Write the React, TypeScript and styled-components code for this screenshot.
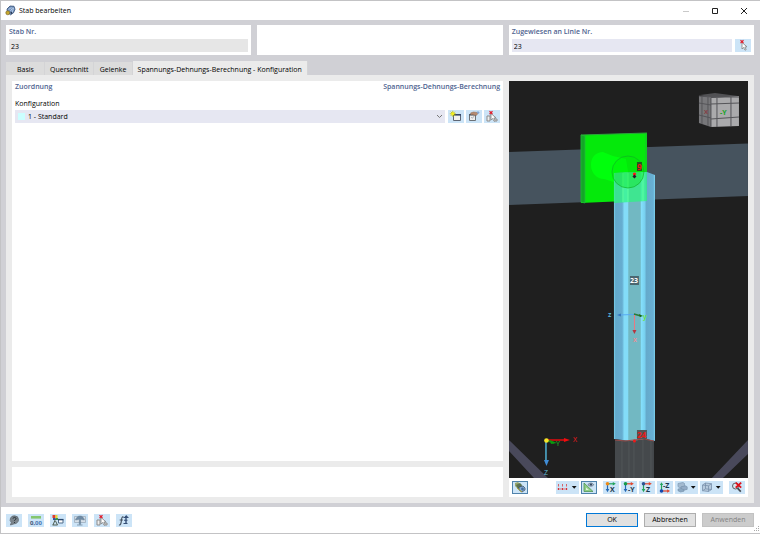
import React from "react";
import styled, { createGlobalStyle, css } from "styled-components";

const Global = createGlobalStyle`
  *, *::before, *::after { box-sizing: border-box; }
  html, body, #root { margin: 0; height: 100%; }
  body { background: #fff; }
  body, button, input, select {
    font-family: "Open Sans", "Noto Sans", sans-serif;
    font-size: 7px;
    font-weight: 500;
    line-height: 10px;
    color: #000;
  }
`;

const Dialog = styled.div`
  display: flex;
  flex-direction: column;
  min-height: 100vh;
  background: #d0d0d5;
  border: 1px solid #c3c3c5;
  border-width: 1px 0 1px 1px;
`;

const TitleBar = styled.header`
  display: flex;
  align-items: center;
  height: 19px;
  padding: 0 3px 0 4px;
  gap: 3px;
  background: #fff;
`;

const Title = styled.h1`
  flex: 1;
  margin: 0;
  font-size: 7px;
  font-weight: 500;
`;

const WindowButton = styled.button`
  width: 26px;
  height: 18px;
  padding: 0;
  border: 0;
  background: none;
  display: grid;
  place-items: center;
`;

const Body = styled.main`
  flex: 1;
  display: flex;
  flex-direction: column;
  padding: 5px 6px 4px 5px;
`;

const HeaderCards = styled.section`
  display: grid;
  grid-template-columns: repeat(3, 1fr);
  gap: 6px;
`;

const Card = styled.div`
  display: flex;
  flex-direction: column;
  height: 30px;
  padding: 2px 3px;
  background: #fff;
`;

const heading = css`
  font-size: 7px;
  line-height: 10px;
  font-weight: 600;
  color: #4f6390;
`;

const CardLabel = styled.label`
  ${heading}
  height: 12px;
`;

const FieldRow = styled.div`
  display: flex;
  gap: 3px;
`;

const Field = styled.input<{ $muted?: boolean }>`
  flex: 1;
  min-width: 0;
  height: 13px;
  padding: 1px 2px 0;
  border: 0;
  background: ${(p) => (p.$muted ? "#e6e6e6" : "#e6e7f2")};
`;

const Tabs = styled.div`
  display: flex;
  align-items: flex-end;
  height: 14px;
  margin-top: 6px;
`;

const Tab = styled.button<{ $active?: boolean }>`
  height: ${(p) => (p.$active ? 14 : 13)}px;
  min-width: 39px;
  padding: ${(p) => (p.$active ? "3px 5px 0" : "2px 4px 0 5px")};
  border: 0;
  border-right: 1px solid #d4d4d6;
  background: ${(p) => (p.$active ? "#ebebeb" : "#dcdcdc")};
`;

const Page = styled.section`
  flex: 1;
  display: grid;
  grid-template-columns: 37fr 18fr;
  gap: 6px;
  padding: 6px;
  background: #ebebeb;
`;

const Column = styled.div`
  display: flex;
  flex-direction: column;
  gap: 6px;
  min-width: 0;
`;

const Panel = styled.div`
  flex: 1;
  padding: 1px 3px;
  background: #fff;
`;

const NotePanel = styled.div`
  height: 30px;
  background: #fff;
`;

const PanelHeader = styled.div`
  display: flex;
  justify-content: space-between;
  height: 17px;
`;

const Heading = styled.h2`
  ${heading}
  margin: 0;
`;

const FormLabel = styled.label`
  display: block;
  height: 11px;
`;

const ConfigRow = styled.div`
  display: flex;
  gap: 2px;
`;

const SelectBox = styled.div`
  flex: 1;
  display: grid;
  grid-template-columns: 12px 1fr 12px;
  align-items: center;
  justify-items: center;
  margin-right: 1px;
  background: #e6e7f2;
  & > * { grid-row: 1; }
  svg { grid-column: 3; pointer-events: none; }
`;

const Select = styled.select`
  grid-column: 1 / -1;
  width: 100%;
  height: 13px;
  padding: 1px 12px 0 13px;
  border: 0;
  background: none;
  appearance: none;
`;

const Swatch = styled.span`
  grid-column: 1;
  width: 7px;
  height: 7px;
  margin-left: 1px;
  background: #ccffff;
  pointer-events: none;
`;

const IconButton = styled.button<{ $wide?: boolean; $pressed?: boolean }>`
  display: flex;
  align-items: center;
  justify-content: center;
  flex: none;
  width: ${(p) => (p.$wide ? 23 : 16)}px;
  height: 13px;
  padding: 0;
  border: ${(p) => (p.$pressed ? "1px solid #4f83ac" : "0")};
  background: #cce4f7;
  svg { flex: none; }
`;

const Viewer = styled.div`
  display: flex;
  flex-direction: column;
  min-width: 0;
  background: #fff;
`;

const Scene = styled.svg`
  display: block;
  flex: 1 1 0;
  width: 100%;
  min-height: 0;
  background: #1f1f1f;
  font-family: "Open Sans", sans-serif;
  font-size: 7px;
`;

const ViewTools = styled.div`
  display: flex;
  align-items: center;
  justify-content: space-between;
  height: 19px;
  padding: 0 3px;
`;

const ToolGroup = styled.div`
  display: flex;
  gap: 2px;
`;

const ToolCluster = styled.div`
  display: flex;
  gap: 6px;
`;

const Footer = styled.footer`
  display: flex;
  align-items: center;
  justify-content: space-between;
  height: 26px;
  padding: 0 6px 0 5px;
  background: #fff;
`;

const Actions = styled.div`
  display: flex;
  align-items: center;
  gap: 6px;
`;

const Action = styled.button<{ $primary?: boolean }>`
  width: 52px;
  height: 14px;
  padding: 0;
  border: 1px solid ${(p) => (p.$primary ? "#0078d7" : "#adadad")};
  background: #e1e1e1;
  &:disabled { color: #838383; background: #cccccc; border-color: #c2c2c2; }
`;

const Grip = styled.svg`
  align-self: flex-end;
  margin: 0 -6px -5px -6px;
`;

const Icon = ({ children, w = 16 }: { children: React.ReactNode; w?: number }) => (
  <svg width={w} height="13" viewBox={`0 0 ${w} 13`} aria-hidden="true" fill="none">
    {children}
  </svg>
);

const PickIcon = ({ boxes = false }: { boxes?: boolean }) => (
  <Icon>
    {boxes && (
      <path d="M3 6h3v5H3zM6 5h2M10 9h3v2h-3" stroke="#8b8b8b" fill="#eee" />
    )}
    <path d="M7 3.5l5 4.3-2.2.2 1.4 2.5-1.2.7-1.4-2.7L7 10z" fill="#fff" stroke="#828282" strokeWidth=".8" />
    <path d="M5.5 1.3l3 2.8m0-2.8l-3 2.8" stroke="#e21c2b" strokeWidth="1.2" />
  </Icon>
);

const NewIcon = () => (
  <Icon>
    <path d="M5.5 4.5h7v6h-7z" fill="#f2f2ee" stroke="#5e6674" />
    <path d="M5 4.8h8" stroke="#34466b" strokeWidth="1.6" />
    <path d="M4.8.8v6M1.8 3.8h6M2.7 1.7l4.2 4.2m0-4.2L2.7 5.9" stroke="#c5c70a" strokeWidth=".9" />
    <circle cx="4.8" cy="3.8" r="1.5" fill="#f6ef16" />
  </Icon>
);

const EditIcon = () => (
  <Icon>
    <path d="M3.5 4.5h6v6h-6z" fill="#eee" stroke="#6c7176" />
    <path d="M3 4.8h7" stroke="#505e6b" strokeWidth="1.5" />
    <path d="M4.5 3l3-1 3.5.4 1 1.2-1.8 1.8-2.2-.3-1.4-.7-1.4.5z" fill="#b78b70" stroke="#86634f" strokeWidth=".5" />
    <path d="M11.3 1.7l1.7 1.5" stroke="#82a7d6" strokeWidth="2" />
    <path d="M5.2 7l1.2 1.3L8.2 6" stroke="#9ba1a8" strokeWidth=".8" />
  </Icon>
);

const AppIcon = () => (
  <svg width="11" height="11" viewBox="0 0 11 11" aria-hidden="true">
    <path d="M2 4L5 1l4 .3 1 3-1.5 3.5-3 2L2.5 7z" fill="#6e8fbd" stroke="#344d72" strokeWidth=".8" />
    <path d="M3.5 4.5l3-2M5 6.5l3-4M7 8L8.5 3" stroke="#c8d9ef" strokeWidth=".8" />
    <circle cx="2.8" cy="7.8" r="2" fill="#c9a92e" stroke="#6d5b20" strokeWidth=".6" />
    <path d="M5.5 6.5l2 1-1.5 2z" fill="#23334d" />
  </svg>
);

const HelpIcon = () => (
  <Icon>
    <path d="M8.5 1.8a4 4 0 014 4c0 2.3-2 4-4.2 4L4.4 11l.9-2.4a4 4 0 013.2-6.8z" fill="#7b858d" stroke="#596168" strokeWidth=".7" />
    <path d="M7 4.6c.2-1.7 3.2-1.5 3 .1-.1 1-1.5 1.1-1.5 2.2M8.5 8v.9" stroke="#263036" />
  </Icon>
);

const UnitsIcon = () => (
  <Icon>
    <path d="M3 2h10v2.6H3z" fill="#84c66e" />
    <text x="2" y="11" fontSize="6" fontWeight="700" fill="#3f5272">0,</text>
    <text x="7" y="11" fontSize="6" fontWeight="700" fill="#4876b2">00</text>
  </Icon>
);

const MemberIcon = () => (
  <Icon>
    <path d="M2.5 1h3v3h-3z" fill="#de3d31" />
    <path d="M5.5 1h2v3h-2z" fill="#e6d832" />
    <path d="M3 4h2.5v2H3z" fill="#3353ae" />
    <path d="M5.5 4H8v2H5.5z" fill="#3b9c48" />
    <path d="M5.5 5L3 11m2.5-4l2 4M2.5 11h5" stroke="#4c5d50" />
    <path d="M8.5 5.5h4.5v3.5H8.5z" fill="#fff" stroke="#506d8b" />
    <path d="M8 5.6h5.5" stroke="#29486f" strokeWidth="1.4" />
  </Icon>
);

const DisplayIcon = () => (
  <Icon>
    <path d="M2.5 2.5h11v6h-11z" fill="#d6e0e9" stroke="#9dadbd" strokeWidth=".8" />
    <path d="M3.5 6C4 3.7 6 2 8.1 2S12 3.7 12.4 6L10 5.6 8.6 5v5.5H7.3V5L6 5.6z" fill="#6f8ba5" stroke="#607a91" strokeWidth=".5" />
    <path d="M5 11h5.5" stroke="#839bb0" />
  </Icon>
);

const FunctionIcon = () => (
  <Icon>
    <path d="M7.5 3C5.2 2.2 5.8 6 5 9c-.5 2-1.2 2.2-2 1.7M3.7 6h3.2" stroke="#43505e" strokeWidth="1.1" />
    <path d="M7.5 3.5h5M7.5 9.5h4M8 6.3h3.5" stroke="#354f77" strokeWidth="1.1" />
    <path d="M10 2v7.5" stroke="#354f77" strokeWidth="1.4" />
    <path d="M8.5 3l1.7-2L12 3z" fill="#354f77" />
  </Icon>
);

const RenderIcon = () => (
  <Icon w={14}>
    <path d="M2 2l3-1 2 2v3L4 7 2 5z" fill="#96a56c" />
    <path d="M3 4l4-2 2 2-1 3-3 1z" fill="#5a7250" />
    <path d="M6 6l4-1 2 2v2l-3 2-3-2z" fill="#88acd4" stroke="#30445a" strokeWidth=".7" />
    <path d="M4 7l5 4" stroke="#b1a62d" />
    <circle cx="9.5" cy="8" r="1.4" fill="#466f9e" />
  </Icon>
);

const Caret = () => <path d="M15.8 5h4.8l-2.4 2.7z" fill="#111" />;

const NumberingIcon = () => (
  <Icon w={23}>
    <path d="M1.5 8h10" stroke="#dc6f74" />
    <path d="M2.5 7v2m4-2v2m4-2v2" stroke="#d53339" />
    <path d="M2.5 3v2.5m4-2.5v2.5m4-2.5v2.5" stroke="#d76368" />
    <Caret />
  </Icon>
);

const MeasureIcon = () => (
  <Icon w={14}>
    <path d="M2 2v8.5h9z" fill="#8fcd85" stroke="#4f9455" strokeWidth=".8" />
    <path d="M4 6.5V9h3z" fill="#dff3df" />
    <path d="M5.8 3.7c2-2.2 4.4-2.2 6 0-1.6 2-4 2-6 0z" fill="#a8b5c5" stroke="#586c82" strokeWidth=".7" />
    <circle cx="9" cy="3.6" r="1.1" fill="#354b64" />
  </Icon>
);

const AxisIcon = ({ label, right, down, origin, up }: { label: string; right?: string; down: string; origin: string; up?: boolean }) => (
  <Icon>
    {up ? (
      <>
        <path d="M4.5 10V3" stroke={down} strokeWidth="1.2" />
        <path d="M2.8 4l1.7-2.8L6.2 4z" fill={down} />
        <path d="M5 10h6" stroke={right} strokeWidth="1.2" />
        <path d="M10.2 8.2l2.8 1.8-2.8 1.8z" fill={right} />
        <circle cx="4.5" cy="10" r="1.8" fill={origin} />
        <text x="6" y="7" fontSize="7" fontWeight="700" fill="#18364b">{label}</text>
      </>
    ) : (
      <>
        <path d="M4.5 3v6" stroke={down} strokeWidth="1.2" />
        <path d="M2.7 8h3.6l-1.8 3.2z" fill={down} />
        <path d="M5 2.8h5.5" stroke={right} strokeWidth="1.2" />
        <path d="M9.8 1l3 1.8-3 1.8z" fill={right} />
        <circle cx="4.5" cy="2.8" r="1.8" fill={origin} />
        <text x="7" y="11" fontSize="7" fontWeight="700" fill="#18364b">{label}</text>
      </>
    )}
  </Icon>
);

const SolidIcon = () => (
  <Icon w={23}>
    <path d="M3 2.5l5-1 1.5 1v3.2l-4.8 1L3 5.6z" fill="#a3bad0" stroke="#7c9ab5" strokeWidth=".7" />
    <path d="M6 5.8l4.5-1 1.7 1v2.6l-4.5 1L6 8.2z" fill="#93acc6" stroke="#7690a9" strokeWidth=".6" />
    <path d="M3 8l3-.6 3 1.5v1.3l-3.4.8L3 9.8z" fill="#8ba8c2" stroke="#7690a9" strokeWidth=".6" />
    <Caret />
  </Icon>
);

const BoxIcon = () => (
  <Icon w={23}>
    <path d="M2.5 4l3-2 6 .7v5.8l-3 2-6-.8z" fill="#b7cbde" />
    <path d="M2.5 4l3-2 6 .7v5.8l-3 2-6-.8zM2.5 4l6 .8 3-2.1M8.5 4.8v5.7M5.5 2v5.8l-3 2m3-2l6 .7" stroke="#7991ac" strokeWidth=".8" />
    <Caret />
  </Icon>
);

const ResetIcon = () => (
  <Icon>
    <circle cx="6.5" cy="5" r="3" fill="#d9e3eb" stroke="#5d6166" />
    <path d="M8.5 7.2l3.3 3.4" stroke="#45494f" strokeWidth="1.7" />
    <path d="M6.7 1.6l5.5 5m0-5l-5.5 5" stroke="#e00f18" strokeWidth="1.8" />
  </Icon>
);

const ModelView = () => (
  <Scene viewBox="509 81 239 397" preserveAspectRatio="xMidYMid slice" role="img" aria-label="Stab 23">
    <defs>
      <linearGradient id="column">
        <stop offset="0" stopColor="#7bd4ed" />
        <stop offset=".04" stopColor="#63a9cb" />
        <stop offset=".2" stopColor="#66add0" />
        <stop offset=".25" stopColor="#83dcf8" />
        <stop offset=".34" stopColor="#83dcf8" />
        <stop offset=".36" stopColor="#72b8c2" />
        <stop offset=".64" stopColor="#72b8c2" />
        <stop offset=".67" stopColor="#84dffb" />
        <stop offset=".75" stopColor="#78d0ef" />
        <stop offset=".79" stopColor="#65aacb" />
        <stop offset=".96" stopColor="#68b0d4" />
        <stop offset="1" stopColor="#82dcf8" />
      </linearGradient>
    </defs>
    <path d="M509 152L748 143.500V196L509 205z" fill="#46535e" />
    <path d="M509 440l39 38h-14l-25-27zM748 440l-36 38h11l25-24z" fill="#49495b" />
    <path d="M615 440h39v38h-39z" fill="#45494c" />
    <path d="M622 440v38M629 440v38M634 440v38M643 440v38M651 440v38" stroke="#525658" />
    <path d="M581 135l66-2v67l-66 3z" fill="#05e90b" />
    <path d="M581 135l4 1v67l-4-1zM646 134v67" fill="#13a827" stroke="#22b73a" strokeWidth=".8" />
    <path d="M581 135l66-2" stroke="#2ba43a" />
    <path d="M603 152c-7 0-12 5-12 13s6 14 13 14l13 4 12-6-3-18-13-3z" fill="#00ff0c" />
    <path d="M614 173l9-.5 24-.5 8 3v266l-9-2-15 2-17-2z" fill="url(#column)" />
    <path d="M614 173l9-.5 24-.5v29l-33 2z" fill="#2af87c" opacity=".7" />
    <path d="M623 173v29M628 173v29M643 173v28" stroke="#5cffa0" opacity=".5" strokeWidth="2" />
    <circle cx="628" cy="172" r="16" fill="#04e90a" fillOpacity=".35" stroke="#0fae25" strokeOpacity=".7" strokeWidth=".9" />
    <path d="M637 162h5v9h-5z" fill="#245820" />
    <text x="637" y="170" fill="#ee1717" fontSize="8" fontWeight="700">9</text>
    <circle cx="634.5" cy="174" r="1.600" fill="#ff1717" />
    <path d="M634.5 174.500l2 2-2 2-2-2z" fill="#28182b" />

    <path d="M630 276h9v9h-9z" fill="#4b6770" />
    <text x="630" y="283" fill="#fff" fontWeight="700">23</text>
    <path d="M634 314.500l-16 .5" stroke="#58aaf3" />
    <path d="M617 315l4-1.500v3z" fill="#3977b6" />
    <path d="M634 314l7 2" stroke="#2b7a36" strokeWidth="1.500" />
    <path d="M639 314l4 2-3 1z" fill="#166713" />
    <path d="M634.500 315v16" stroke="#ed7780" />
    <path d="M632.500 330h4l-2 4z" fill="#b7353f" />
    <text x="608" y="317" fill="#5dbbe2" fontWeight="600">z</text>
    <text x="643" y="319" fill="#66e431" fontWeight="600">y</text>
    <text x="633" y="342" fill="#f08b91" fontWeight="600">x</text>

    <path d="M615 440l10 1 9-1 10-1 10 2" stroke="#974b48" fill="none" />
    <path d="M637 430h10v9h-10z" fill="#535456" />
    <text x="637" y="438" fill="#f01616" fontSize="8" fontWeight="700">24</text>
    <circle cx="634.500" cy="441" r="1.500" fill="#f01818" />

    <path d="M546 440h20" stroke="#f30b0e" strokeWidth="1.400" />
    <path d="M564 438l6 2-6 2z" fill="#f30b0e" />
    <path d="M546 440v22" stroke="#4fb1d4" strokeWidth="1.500" />
    <path d="M544 460h5l-2.500 6z" fill="#408dd7" />
    <path d="M546 440l8 3" stroke="#159116" strokeWidth="1.500" />
    <path d="M550 440l7 3-6 1z" fill="#0c980e" />
    <circle cx="546.500" cy="440.500" r="2.300" fill="#f6e626" />
    <text x="573" y="442" fill="#f5181c">X</text>
    <text x="556" y="446" fill="#1fc520">Y</text>
    <text x="544" y="475" fill="#63bdd7">Z</text>

    <path d="M700 95l15-2 23 3-27 2z" fill="#515154" />
    <path d="M699 96l12 1v30l-12-4z" fill="#77777a" />
    <path d="M711 98l28-2v30l-28 1z" fill="#aaaaac" />
    <path d="M699 96l12 1M699 103l12 2M699 115l12 3M702 96v28M708 97v29M711 98v29M717 98v29M731 97v29M711 104l28-1M711 119l28-2M711 97h28" stroke="#555559" fill="none" />
    <text x="704" y="114" fontSize="6" fontWeight="700" fill="#863d42">X</text>
    <text x="720" y="115" fontSize="7" fontWeight="700" fill="#16a524">-Y</text>
  </Scene>
);

const tabs = ["Basis", "Querschnitt", "Gelenke", "Spannungs-Dehnungs-Berechnung - Konfiguration"];

export default function App() {
  return (
    <>
      <Global />
      <Dialog>
        <TitleBar>
          <AppIcon />
          <Title>Stab bearbeiten</Title>
          <WindowButton aria-label="Minimieren" disabled>
            <svg width="8" height="8"><path d="M1 4.5h6" stroke="#c9c9c9" /></svg>
          </WindowButton>
          <WindowButton aria-label="Maximieren">
            <svg width="8" height="8"><path d="M1.5 1.5h5v5h-5z" fill="none" stroke="#222" /></svg>
          </WindowButton>
          <WindowButton aria-label="Schließen">
            <svg width="8" height="8"><path d="M1 1l6 6m0-6L1 7" stroke="#222" /></svg>
          </WindowButton>
        </TitleBar>

        <Body>
          <HeaderCards>
            <Card>
              <CardLabel htmlFor="member">Stab Nr.</CardLabel>
              <FieldRow><Field id="member" $muted readOnly defaultValue="23" /></FieldRow>
            </Card>
            <Card />
            <Card>
              <CardLabel htmlFor="line">Zugewiesen an Linie Nr.</CardLabel>
              <FieldRow>
                <Field id="line" defaultValue="23" />
                <IconButton aria-label="Linie auswählen"><PickIcon /></IconButton>
              </FieldRow>
            </Card>
          </HeaderCards>

          <Tabs role="tablist">
            {tabs.map((tab, i) => (
              <Tab key={tab} role="tab" aria-selected={i === 3} $active={i === 3}>{tab}</Tab>
            ))}
          </Tabs>

          <Page>
            <Column>
              <Panel>
                <PanelHeader>
                  <Heading>Zuordnung</Heading>
                  <Heading>Spannungs-Dehnungs-Berechnung</Heading>
                </PanelHeader>
                <FormLabel htmlFor="config">Konfiguration</FormLabel>
                <ConfigRow>
                  <SelectBox>
                    <Select id="config"><option>1 - Standard</option></Select>
                    <Swatch />
                    <svg width="7" height="5" viewBox="0 0 7 5"><path d="M1 1l2.5 2.5L6 1" fill="none" stroke="#777" /></svg>
                  </SelectBox>
                  <IconButton aria-label="Neu"><NewIcon /></IconButton>
                  <IconButton aria-label="Bearbeiten"><EditIcon /></IconButton>
                  <IconButton aria-label="Auswählen"><PickIcon boxes /></IconButton>
                </ConfigRow>
              </Panel>
              <NotePanel />
            </Column>

            <Viewer>
              <ModelView />
              <ViewTools>
                <IconButton $pressed aria-label="Rendern"><RenderIcon /></IconButton>
                <ToolCluster>
                  <ToolGroup>
                    <IconButton $wide aria-label="Nummerierung"><NumberingIcon /></IconButton>
                    <IconButton $pressed aria-label="Maße"><MeasureIcon /></IconButton>
                  </ToolGroup>
                  <ToolGroup>
                    <IconButton aria-label="Ansicht X"><AxisIcon label="X" right="#20a35a" down="#2268b4" origin="#ee8a19" /></IconButton>
                    <IconButton aria-label="Ansicht -Y"><AxisIcon label="-Y" right="#e2452c" down="#2268b4" origin="#159b4a" /></IconButton>
                    <IconButton aria-label="Ansicht Z"><AxisIcon label="Z" right="#e2452c" down="#20a35a" origin="#2d5294" /></IconButton>
                    <IconButton aria-label="Ansicht -Z"><AxisIcon label="-Z" right="#e2452c" down="#20a35a" origin="#1649ad" up /></IconButton>
                    <IconButton $wide aria-label="Darstellung"><SolidIcon /></IconButton>
                    <IconButton $wide aria-label="Begrenzung"><BoxIcon /></IconButton>
                  </ToolGroup>
                  <IconButton aria-label="Ansicht zurücksetzen"><ResetIcon /></IconButton>
                </ToolCluster>
              </ViewTools>
            </Viewer>
          </Page>
        </Body>

        <Footer>
          <Actions>
            <IconButton aria-label="Hilfe"><HelpIcon /></IconButton>
            <IconButton aria-label="Einheiten"><UnitsIcon /></IconButton>
            <IconButton aria-label="Eigenschaften"><MemberIcon /></IconButton>
            <IconButton aria-label="Anzeige"><DisplayIcon /></IconButton>
            <IconButton aria-label="Auswählen"><PickIcon boxes /></IconButton>
            <IconButton aria-label="Funktion"><FunctionIcon /></IconButton>
          </Actions>
          <Actions>
            <Action $primary>OK</Action>
            <Action>Abbrechen</Action>
            <Action disabled>Anwenden</Action>
            <Grip width="6" height="6" aria-hidden="true">
              <path d="M4 0h1v1H4zM2 2h1v1H2zM4 2h1v1H4zM0 4h1v1H0zM2 4h1v1H2zM4 4h1v1H4z" fill="#aaa" />
            </Grip>
          </Actions>
        </Footer>
      </Dialog>
    </>
  );
}
